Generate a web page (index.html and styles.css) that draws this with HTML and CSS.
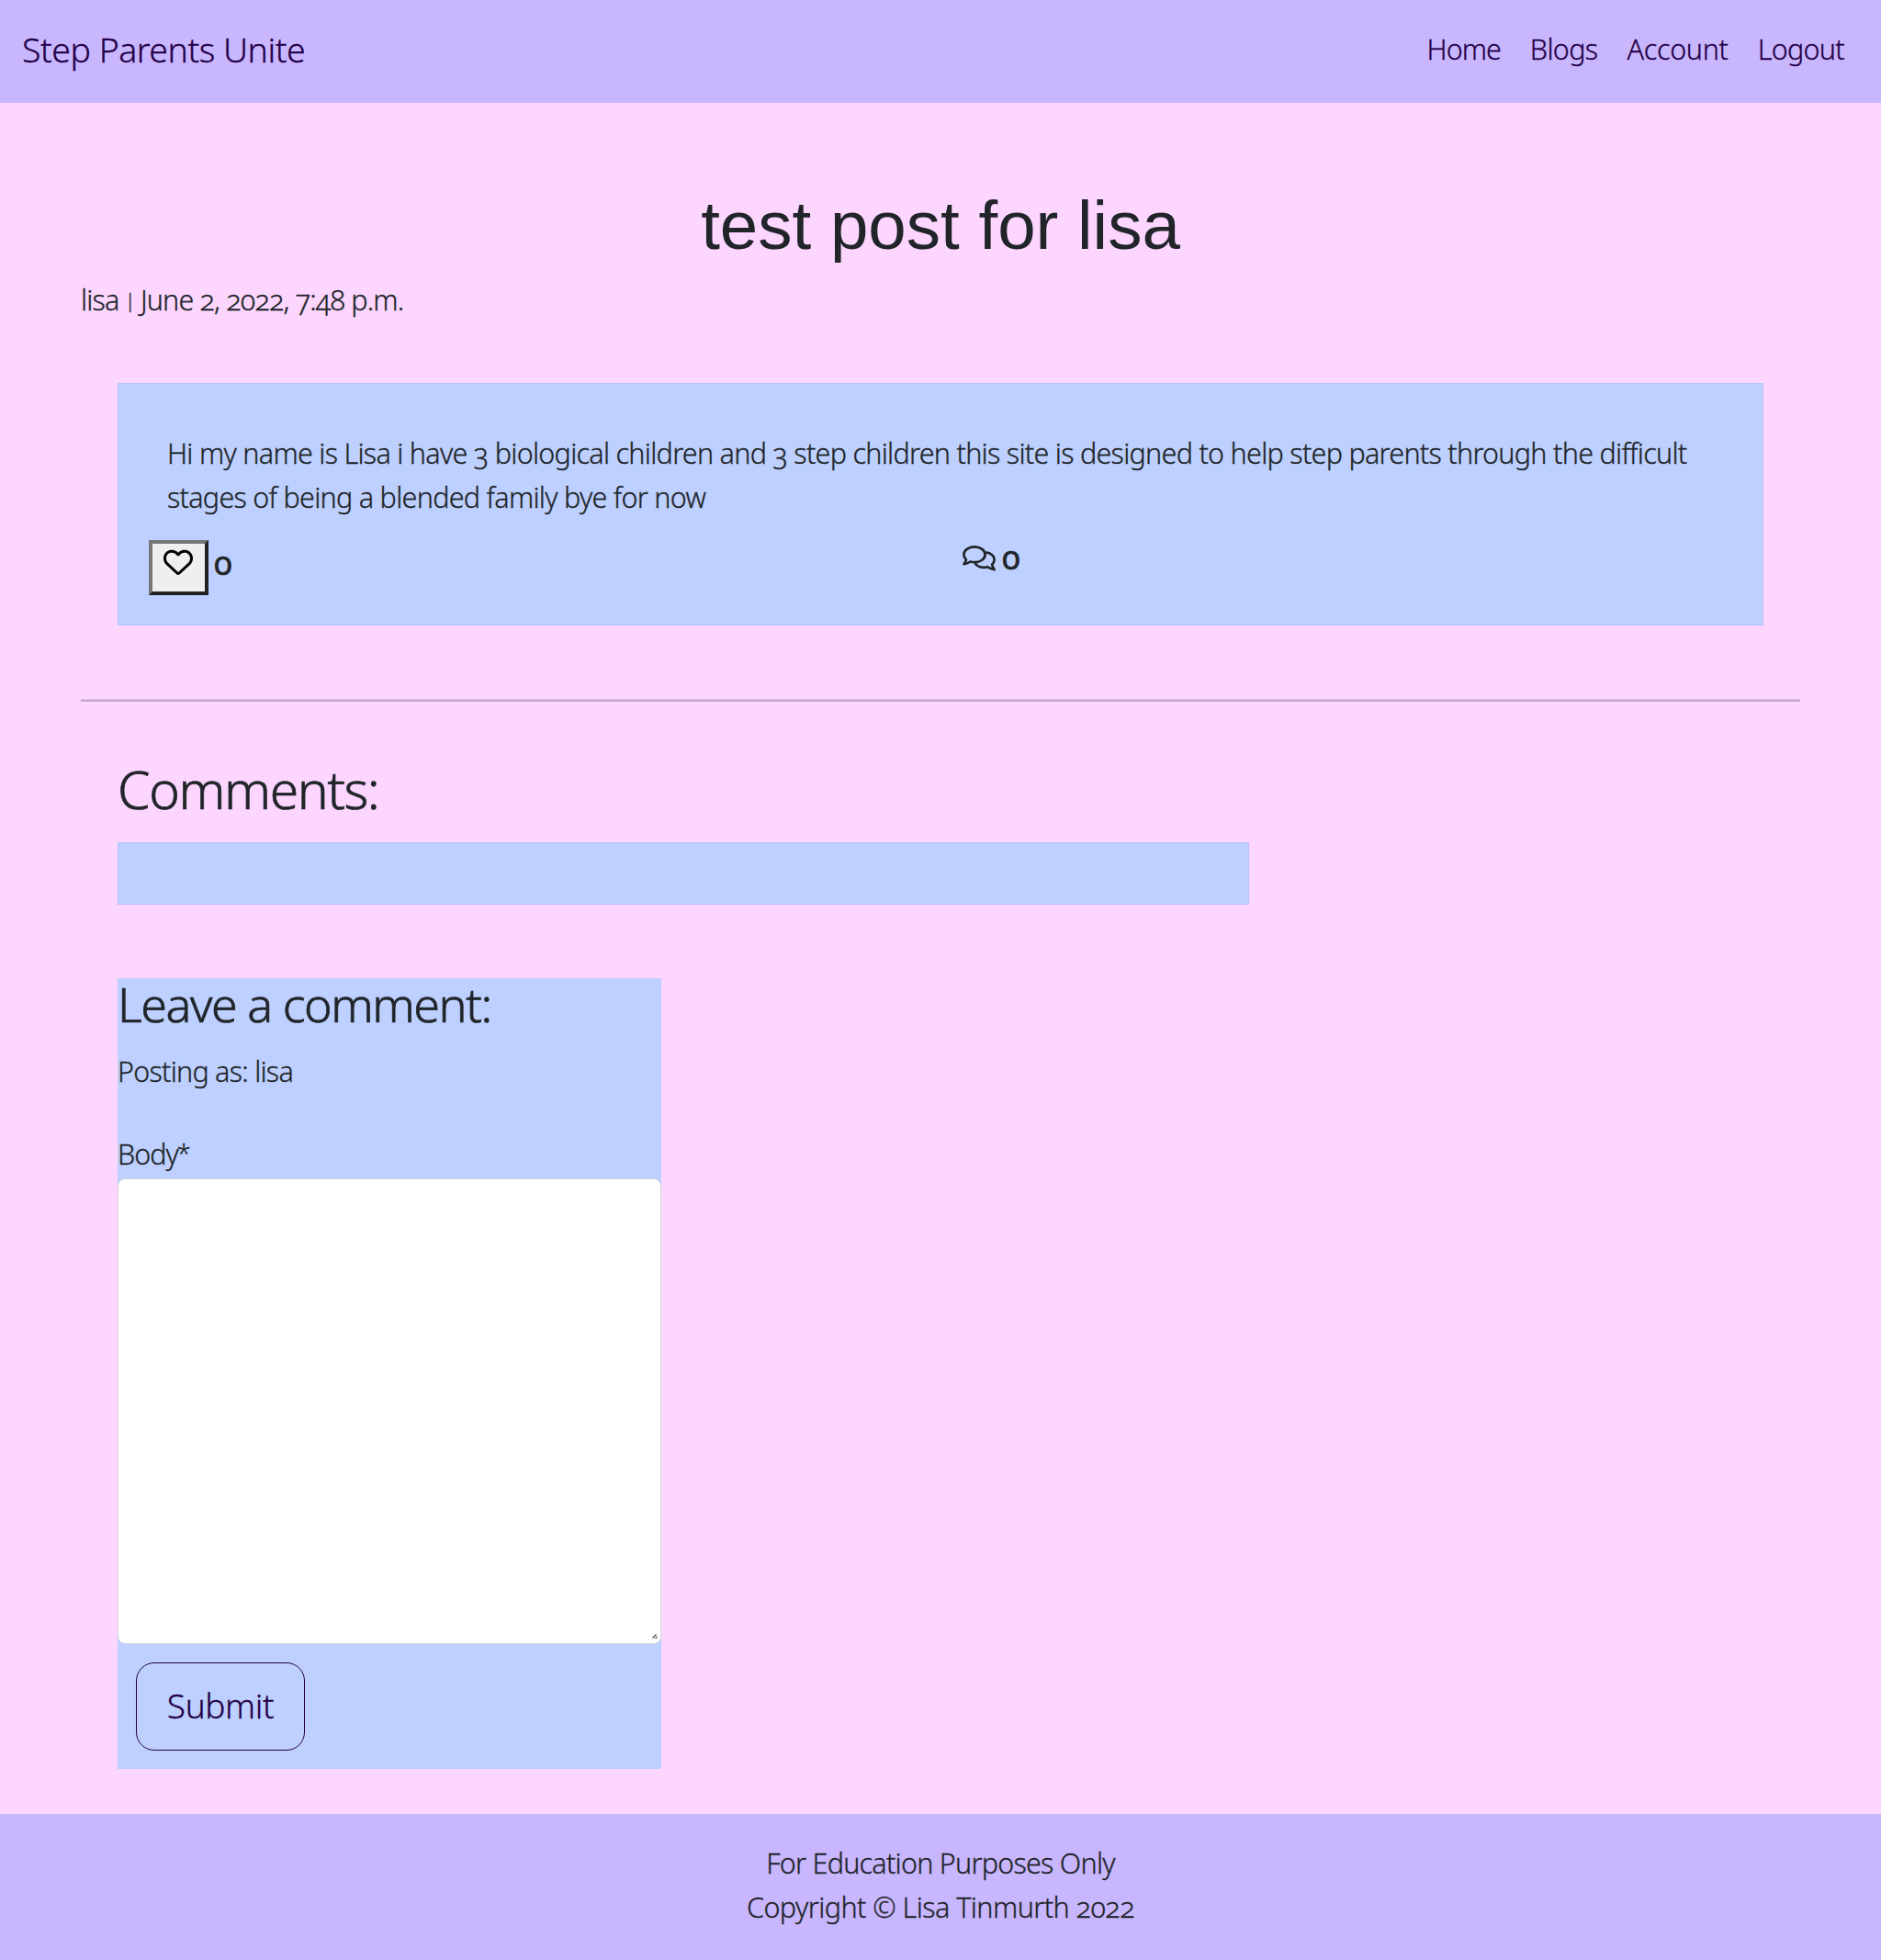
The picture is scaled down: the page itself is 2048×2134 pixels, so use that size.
FILE: index.html
```html
<!DOCTYPE html>
<html lang="en">
<head>
<meta charset="utf-8">
<title>Step Parents Unite</title>
<link rel="stylesheet" href="styles.css">
</head>
<body>
<header class="site-header">
  <a class="brand" href="#">Step Parents Unite</a>
  <nav class="nav">
    <a class="nav-home" href="#">Home</a>
    <a class="nav-blogs" href="#">Blogs</a>
    <a class="nav-account" href="#">Account</a>
    <a class="nav-logout" href="#">Logout</a>
  </nav>
</header>
<main class="page">
  <h1 class="post-title">test post for lisa</h1>
  <p class="post-meta">lisa <span class="bar">|</span> June 2, 2022, 7:48 p.m.</p>
  <article class="post-card">
    <p class="post-body">Hi my name is Lisa i have 3 biological children and 3 step children this site is designed to help step parents through the difficult<br>stages of being a blended family bye for now</p>
    <div class="post-stats">
      <div class="stat">
        <button class="like" type="button" aria-label="Like">
          <svg width="32" height="32" viewBox="0 0 512 512"><path d="M225.8 468.2l-2.5-2.3L48.1 303.2C17.4 274.7 0 234.7 0 192.8v-3.3c0-70.4 50-130.8 119.2-144C158.6 37.9 198.9 47 231 69.6c9 6.4 17.4 13.8 25 22.3c4.2-4.8 8.7-9.2 13.5-13.3c3.7-3.2 7.5-6.2 11.5-9C313.1 47 353.4 37.9 392.8 45.4C462 58.6 512 119.1 512 189.5v3.3c0 41.9-17.4 81.9-48.1 110.4L288.7 465.9l-2.5 2.3c-8.2 7.6-19 11.9-30.2 11.9s-22-4.2-30.2-11.9zM239.1 145c-.4-.3-.7-.7-1-1.1l-17.8-20c-23.1-25.9-58-37.7-92-31.2C81.6 101.5 48 142.1 48 189.5v3.3c0 28.5 11.9 55.8 32.8 75.2L256 430.7 431.2 268c20.9-19.4 32.8-46.7 32.8-75.2v-3.3c0-47.3-33.6-88-80.1-96.9c-34-6.5-69 5.4-92 31.2l-17.8 20c-.3 .4-.7 .7-1 1.1c-4.5 4.5-10.6 7-16.9 7s-12.4-2.5-16.9-7z"/></svg>
        </button>
        <span class="count">0</span>
      </div>
      <div class="stat stat-comments">
        <svg class="bubbles" width="36" height="28" viewBox="0 0 36 28"><path d="M13 1.400c6.600 0 11.600 3.700 11.600 8.400s-5 8.400-11.600 8.400c-1.700 0-3.200-.2-4.600-.7-1.800 1.300-4.200 2.400-6.900 2.700 1.200-1.400 2.100-3.100 2.400-4.700C2.300 13.900 1.400 12 1.400 9.800c0-4.700 5-8.400 11.600-8.400zM25.500 7.400c5.200.6 9.100 3.700 9.100 7.800 0 2-.9 3.900-2.500 5.300.3 1.900 1.200 3.900 2.500 5.600-2.900-.2-5.300-1.400-7.200-2.900-1.400.4-2.900.6-4.500.6-4 0-7.500-1.900-9.300-4.500"/></svg>
        <span class="count">0</span>
      </div>
    </div>
  </article>
  <hr class="divider">
  <section class="comments">
    <h2 class="comments-title">Comments:</h2>
    <div class="comment-list"></div>
    <form class="comment-form">
      <h3 class="form-title">Leave a comment:</h3>
      <p class="posting-as">Posting as: lisa</p>
      <label class="body-label" for="body">Body<span class="required">*</span></label>
      <div class="field">
        <textarea class="body-input" id="body"></textarea>
        <svg class="grip" width="6" height="6" viewBox="0 0 6 6"><path d="M.5 4.500 4.500.5M3.500 5 5.500 3"/></svg>
      </div>
      <button class="submit" type="button">Submit</button>
    </form>
  </section>
</main>
<footer class="site-footer">
  <p class="purpose">For Education Purposes Only</p>
  <p class="copyright">Copyright © Lisa Tinmurth 2022</p>
</footer>
</body>
</html>
```
FILE: styles.css
```css
* { box-sizing: border-box; }

body {
  margin: 0;
  min-height: 2134px;
  display: flex;
  flex-direction: column;
  background: #fcd6ff;
  color: #212529;
  font: 300 30.5px/48px "Noto Sans", "Open Sans", sans-serif;
  font-variant-numeric: oldstyle-nums;
  -webkit-text-stroke: 0.3px currentColor;
}

h1, h2, h3, p { margin: 0; font-weight: 300; }
h2, h3 { -webkit-text-stroke-width: 0.7px; }
a { color: #240046; text-decoration: none; white-space: nowrap; }
svg { display: block; }

.site-header {
  height: 112px;
  padding: 24px 40px 0 24px;
  display: flex;
  justify-content: space-between;
  align-items: flex-start;
  background: #c8b6ff;
}
.brand { font-size: 37.5px; line-height: 60px; letter-spacing: -0.5px; }
.nav { display: flex; gap: 32px; padding-top: 5px; }
.nav-home { letter-spacing: -1px; }
.nav-blogs { letter-spacing: -0.65px; }
.nav-account { letter-spacing: -0.3px; }
.nav-logout { letter-spacing: -0.7px; }

.page { padding: 89px 88px 49px; }
.post-title {
  text-align: center;
  font: 400 74.5px/90px "Liberation Sans", Arial, sans-serif;
  -webkit-text-stroke-width: 0;
}
.post-meta {
  margin: 11px 0 67px;
  letter-spacing: -0.83px;
}
.bar { font-size: 22px; line-height: 1; margin: 0 -1px; position: relative; top: -3px; }

.post-card {
  height: 264px;
  margin: 0 40px 80px;
  padding: 51px 31px 0 33px;
  border: 1px solid #b8c1ff;
  background: #bdd0ff;
}
.post-body { padding-left: 20px; white-space: nowrap; letter-spacing: -0.72px; }
.post-stats { margin-top: 23px; display: grid; grid-template-columns: 886px 1fr; }
.stat { display: flex; align-items: flex-start; gap: 6px; }
.like {
  display: flex;
  align-items: flex-start;
  width: 65px;
  height: 60px;
  padding: 4px 0 0 12px;
  border: 4px solid;
  border-color: #767676 #212121 #212121 #767676;
  background: #efefef;
}
.count { font-size: 36px; font-weight: 400; padding-top: 1px; -webkit-text-stroke-width: 0.6px; }
.bubbles { margin-top: 6px; fill: none; stroke: #212529; stroke-width: 2.7; stroke-linejoin: round; }
.stat-comments { gap: 7px; }
.stat-comments .count { margin-top: -6px; }

.divider {
  height: 3px;
  margin: 0;
  border: 0;
  border-top: 1px solid #dfbfe4;
  background: #c5a9c9;
}

.comments { padding: 61px 40px 0; }
.comments-title { font-size: 57px; line-height: 68px; letter-spacing: -1.35px; }
.comment-list {
  width: 1232px;
  height: 68px;
  margin: 24px 0 80px;
  border: 1px solid #b8c1ff;
  background: #bdd0ff;
}

.comment-form { width: 592px; height: 861px; background: #bdd0ff; }
.form-title { font-size: 52px; line-height: 54px; letter-spacing: -1.45px; padding-top: 1px; }
.posting-as { margin-top: 22px; letter-spacing: -0.75px; }
.body-label { display: block; margin-top: 42px; letter-spacing: -1px; }
.required { font-size: 27px; line-height: 1; margin-left: -1px; position: relative; top: -2px; }
.field { position: relative; margin: 3px 0 20px; height: 507px; }
.body-input {
  display: block;
  width: 100%;
  height: 100%;
  border: 1px solid #ced4da;
  border-radius: 8px;
  background: #fff;
  resize: none;
}
.grip { position: absolute; right: 4px; bottom: 5px; fill: none; stroke: #555; stroke-width: 1.4; }
.submit {
  display: block;
  width: 184px;
  height: 96px;
  margin-left: 20px;
  padding: 0 0 2px;
  border: 1.5px solid #240046;
  border-radius: 20px;
  background: transparent;
  color: #240046;
  font: 300 37px/60px "Noto Sans", "Open Sans", sans-serif;
  letter-spacing: -0.4px;
  -webkit-text-stroke: 0.3px #240046;
}

.site-footer {
  flex: 1;
  padding-top: 29px;
  background: #c8b6ff;
  text-align: center;
}
.purpose { letter-spacing: -0.75px; }
.copyright { letter-spacing: -0.55px; }
```
